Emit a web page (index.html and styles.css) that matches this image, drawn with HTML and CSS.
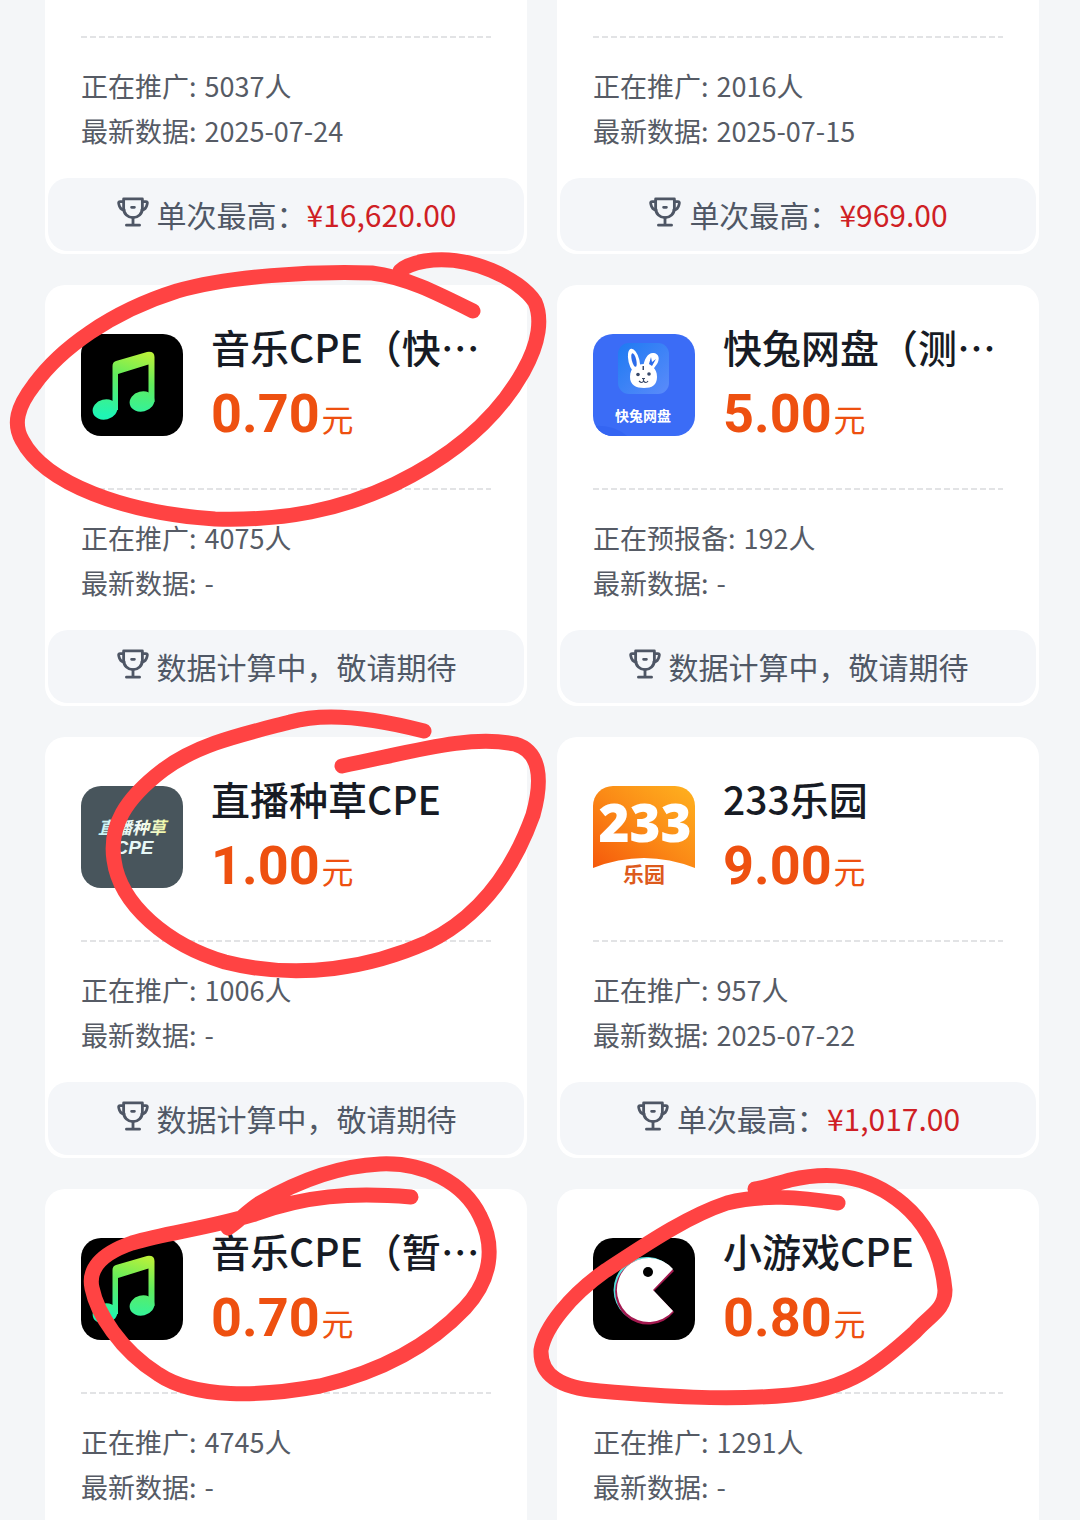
FILE: index.html
```
<!DOCTYPE html>
<html lang="zh-CN">
<head>
  <meta charset="UTF-8">
  <meta name="viewport" content="width=device-width, initial-scale=1.0">
  <title>推广任务</title>
  <link rel="stylesheet" href="styles.css">
</head>
<body>

  <svg class="defs" width="0" height="0" aria-hidden="true">
    <defs>
      <linearGradient id="note-fill" gradientUnits="userSpaceOnUse" x1="60" y1="18" x2="40" y2="86">
        <stop offset="0" stop-color="#b8f13a"/>
        <stop offset="0.4" stop-color="#62ec5c"/>
        <stop offset="1" stop-color="#1ff5b4"/>
      </linearGradient>
      <linearGradient id="orange-fill" x1="0" y1="1" x2="1" y2="0">
        <stop offset="0" stop-color="#f5590b"/>
        <stop offset="0.5" stop-color="#fb8a16"/>
        <stop offset="1" stop-color="#ffb21f"/>
      </linearGradient>
      <linearGradient id="tile-fill" x1="0" y1="0" x2="1" y2="1">
        <stop offset="0" stop-color="#1e7af2"/>
        <stop offset="1" stop-color="#5b8bfa"/>
      </linearGradient>
      <linearGradient id="pale-fill" x1="0" y1="0" x2="1" y2="0">
        <stop offset="0" stop-color="#c5f3f3"/>
        <stop offset="0.6" stop-color="#f4fbf6"/>
        <stop offset="1" stop-color="#eef79a"/>
      </linearGradient>
    </defs>
    <symbol id="trophy" viewBox="0 0 34 32">
      <g fill="none" stroke="#4e5665" stroke-width="3" stroke-linecap="round" stroke-linejoin="round">
        <path d="M7 2H27V12C27 18 22.500 22 17 22S7 18 7 12Z"/>
        <path d="M7 5H3C1.500 5 1.500 6 2 8C2.600 11 4.500 13.500 7.500 14"/>
        <path d="M27 5H31C32.500 5 32.500 6 32 8C31.400 11 29.500 13.500 26.500 14"/>
        <path d="M17 22V29M10 30H24M15.500 11H18.500"/>
      </g>
    </symbol>
    <symbol id="note" viewBox="0 0 102 102">
      <rect width="102" height="102" fill="#000"/>
      <g fill="url(#note-fill)">
        <ellipse cx="24" cy="75.500" rx="12.500" ry="10" transform="rotate(-14 24 75.500)"/>
        <ellipse cx="61" cy="67.500" rx="12.500" ry="10" transform="rotate(-14 61 67.500)"/>
        <path d="M31.500 76V32Q31.500 28 35 27L66 18Q73.500 17 73.500 23V68H67.500V30.500L37 40V76Z"/>
      </g>
    </symbol>
  </svg>

  <main class="page">
    <section class="grid">

      <article class="card card-top">
        <div class="info">
          <p><span>正在推广:</span> 5037人</p>
          <p><span>最新数据:</span> 2025-07-24</p>
        </div>
        <div class="best">
          <svg class="trophy"><use href="#trophy"/></svg>
          <span>单次最高：<b>¥16,620.00</b></span>
        </div>
      </article>

      <article class="card card-top">
        <div class="info">
          <p><span>正在推广:</span> 2016人</p>
          <p><span>最新数据:</span> 2025-07-15</p>
        </div>
        <div class="best">
          <svg class="trophy"><use href="#trophy"/></svg>
          <span>单次最高：<b>¥969.00</b></span>
        </div>
      </article>

      <article class="card">
        <div class="head">
          <svg class="logo" viewBox="0 0 102 102"><use href="#note"/></svg>
          <div class="title">
            <h2>音乐CPE（快…</h2>
            <p class="price">0.70<small>元</small></p>
          </div>
        </div>
        <div class="info">
          <p><span>正在推广:</span> 4075人</p>
          <p><span>最新数据:</span> -</p>
        </div>
        <div class="best">
          <svg class="trophy"><use href="#trophy"/></svg>
          <span>数据计算中，敬请期待</span>
        </div>
      </article>

      <article class="card">
        <div class="head">
          <svg class="logo" viewBox="0 0 102 102">
            <rect width="102" height="102" fill="#3b6cf6"/>
            <path d="M0 92Q20 90 34 102H0Z" fill="#3465f2"/>
            <rect x="25" y="9" width="51" height="51" rx="11" fill="url(#tile-fill)"/>
            <g fill="#fff">
              <ellipse cx="41" cy="27" rx="5.500" ry="12.500" transform="rotate(-14 41 27)"/>
              <path d="M50 34C51 25 55 18 61 19C66 20 67 25 64 30C62 33 60 35 59 38Z"/>
              <path d="M37 43C37 33 44 30 51 30S64 34 64 43C64 51 59 54 51 54S37 51 37 43Z"/>
            </g>
            <ellipse cx="41" cy="26" rx="2.200" ry="7" transform="rotate(-14 41 26)" fill="#2b6bea"/>
            <path d="M56 30L58 23L59 28L63 25L59 32Z" fill="#2b6bea"/>
            <g fill="#394a6a">
              <circle cx="45" cy="40.500" r="1.800"/>
              <circle cx="56" cy="40" r="1.800"/>
              <rect x="49.500" y="32" width="1.500" height="4"/>
            </g>
            <path d="M46 47Q49 50 50.500 47Q53 50 55 47M50.500 47V44.500M49 44.500H52" fill="none" stroke="#394a6a" stroke-width="1.200"/>
            <text class="logo-text" x="50" y="87" font-size="14" fill="#fff">快兔网盘</text>
          </svg>
          <div class="title">
            <h2>快兔网盘（测…</h2>
            <p class="price">5.00<small>元</small></p>
          </div>
        </div>
        <div class="info">
          <p><span>正在预报备:</span> 192人</p>
          <p><span>最新数据:</span> -</p>
        </div>
        <div class="best">
          <svg class="trophy"><use href="#trophy"/></svg>
          <span>数据计算中，敬请期待</span>
        </div>
      </article>

      <article class="card">
        <div class="head">
          <svg class="logo" viewBox="0 0 102 102">
            <rect width="102" height="102" fill="#48555c"/>
            <text class="logo-text slant" x="51" y="48" font-size="17" fill="url(#pale-fill)">直播种草</text>
            <text class="logo-text latin slant" x="53" y="68" font-size="19" fill="#e6f8f7">CPE</text>
          </svg>
          <div class="title">
            <h2>直播种草CPE</h2>
            <p class="price">1.00<small>元</small></p>
          </div>
        </div>
        <div class="info">
          <p><span>正在推广:</span> 1006人</p>
          <p><span>最新数据:</span> -</p>
        </div>
        <div class="best">
          <svg class="trophy"><use href="#trophy"/></svg>
          <span>数据计算中，敬请期待</span>
        </div>
      </article>

      <article class="card">
        <div class="head">
          <svg class="logo" viewBox="0 0 102 102">
            <rect width="102" height="102" fill="#fff"/>
            <path d="M0 0H102V82Q51 62 0 82Z" fill="url(#orange-fill)"/>
            <text class="logo-text round" x="52" y="56" font-size="53" fill="#fff">233</text>
            <text class="logo-text" x="51" y="96" font-size="21" fill="#dd5a1c">乐园</text>
          </svg>
          <div class="title">
            <h2>233乐园</h2>
            <p class="price">9.00<small>元</small></p>
          </div>
        </div>
        <div class="info">
          <p><span>正在推广:</span> 957人</p>
          <p><span>最新数据:</span> 2025-07-22</p>
        </div>
        <div class="best">
          <svg class="trophy"><use href="#trophy"/></svg>
          <span>单次最高：<b>¥1,017.00</b></span>
        </div>
      </article>

      <article class="card card-bottom">
        <div class="head">
          <svg class="logo" viewBox="0 0 102 102"><use href="#note"/></svg>
          <div class="title">
            <h2>音乐CPE（暂…</h2>
            <p class="price">0.70<small>元</small></p>
          </div>
        </div>
        <div class="info">
          <p><span>正在推广:</span> 4745人</p>
          <p><span>最新数据:</span> -</p>
        </div>
      </article>

      <article class="card card-bottom">
        <div class="head">
          <svg class="logo" viewBox="0 0 102 102">
            <rect width="102" height="102" fill="#000"/>
            <path d="M79 31A33 33 0 1 0 79 73L60 52Z" fill="#54e0dc"/>
            <path d="M81 33A33 33 0 1 0 81 74L61 53Z" fill="#a3194f"/>
            <path d="M80 31A32 32 0 1 0 80 73L60 52Z" fill="#fff"/>
            <circle cx="55" cy="34" r="5" fill="#000"/>
          </svg>
          <div class="title">
            <h2>小游戏CPE</h2>
            <p class="price">0.80<small>元</small></p>
          </div>
        </div>
        <div class="info">
          <p><span>正在推广:</span> 1291人</p>
          <p><span>最新数据:</span> -</p>
        </div>
      </article>

    </section>

    <!-- 手绘红圈 -->
    <svg class="marks" viewBox="0 0 1080 1520" aria-hidden="true">
      <path d="M473 311C435 292 405 277 372 273C310 271 230 276 177 291C110 312 60 349 34 385C17 407 13 424 22 440C45 484 125 513 215 519C285 521 340 510 395 484C455 455 497 418 523 372C540 342 542 318 535 302C520 279 470 254 425 261C414 263 405 266 400 271"/>
      <path d="M424 731C370 717 325 712 290 722C240 735 198 744 163 770C125 799 109 826 114 860C120 905 168 945 225 962C300 981 372 967 428 942C485 914 515 865 533 815C543 779 540 751 515 744C470 735 420 750 342 766"/>
      <path d="M411 1197C350 1192 305 1196 255 1214C205 1229 170 1232 132 1243C100 1254 88 1270 92 1288C97 1313 120 1350 158 1374C195 1399 260 1397 320 1386C380 1372 430 1345 465 1308C491 1280 496 1247 480 1216C464 1183 425 1162 380 1164C335 1166 293 1184 260 1203C245 1213 238 1222 228 1228"/>
      <path d="M838 1203C800 1197 762 1194 727 1203C685 1217 642 1247 605 1271C570 1296 545 1327 541 1350C540 1375 560 1388 600 1391C660 1396 725 1401 790 1395C850 1389 880 1364 915 1332C930 1315 945 1310 945 1290C942 1258 930 1227 903 1204C865 1172 825 1172 790 1180C775 1184 764 1188 755 1189"/>
    </svg>
  </main>

</body>
</html>
```
FILE: styles.css
```
* {
  box-sizing: border-box;
}
body {
  margin: 0;
  background-color: #f4f6f8;
  color: #565b65;
  font-family: "Noto Sans CJK SC", "Noto Sans", sans-serif;
}
h2, p {
  margin: 0;
}
.defs {
  display: block;
}
.page {
  position: relative;
}
.grid {
  display: grid;
  grid-template-columns: 1fr 1fr;
  gap: 31px 30px;
  padding: 0 41px 0 45px;
}
.card {
  background-color: #fff;
  border-radius: 20px;
  padding: 0 3px 3px;
  min-width: 0;
}
.card-top {
  border-radius: 0 0 20px 20px;
  padding-top: 36px;
}
.card-bottom {
  border-radius: 20px 20px 0 0;
  padding-bottom: 0;
}
.head {
  display: flex;
  align-items: flex-start;
  gap: 28px;
  padding: 32px 33px 35px;
}
.logo {
  flex: none;
  width: 102px;
  height: 102px;
  margin-top: 17px;
  border-radius: 20px;
}
.logo-text {
  font-family: "Noto Sans CJK SC", sans-serif;
  font-weight: 700;
  text-anchor: middle;
}
.latin {
  font-family: "Liberation Sans", sans-serif;
}
.slant {
  font-style: italic;
}
.round {
  font-family: "Open Sans", sans-serif;
  font-weight: 800;
}
.title {
  min-width: 0;
}
.title h2 {
  color: #171b24;
  font-size: 39px;
  font-weight: 500;
  line-height: 58px;
  white-space: nowrap;
}
.price {
  color: #ee5010;
  font-family: Roboto, sans-serif;
  font-size: 54px;
  font-weight: 700;
  line-height: 78px;
  white-space: nowrap;
}
.price small {
  font-family: "Noto Sans CJK SC", sans-serif;
  font-size: 32px;
  font-weight: 400;
  line-height: 1;
  margin-left: 2px;
}
.info {
  margin: 0 33px;
  padding: 27px 0 25px;
  font-size: 27px;
  line-height: 45px;
  background: repeating-linear-gradient(90deg, #e2e3e5 0 6px, transparent 6px 9px) top / 100% 2px no-repeat;
}
.info span {
  margin-right: 2px;
}
.card-bottom .info {
  padding-bottom: 12px;
}
.best {
  display: flex;
  align-items: center;
  justify-content: center;
  gap: 7px;
  height: 73px;
  padding-bottom: 2px;
  background-color: #f4f6f9;
  border-radius: 20px;
  color: #505866;
  font-size: 30px;
}
.best b {
  color: #cf1f25;
  font-weight: 400;
}
.trophy {
  width: 34px;
  height: 30px;
  margin-bottom: 4px;
}
.marks {
  position: absolute;
  top: 0;
  left: 0;
  width: 100%;
  pointer-events: none;
}
.marks path {
  fill: none;
  stroke: #ff4343;
  stroke-width: 15px;
  stroke-linecap: round;
  stroke-linejoin: round;
}
```
